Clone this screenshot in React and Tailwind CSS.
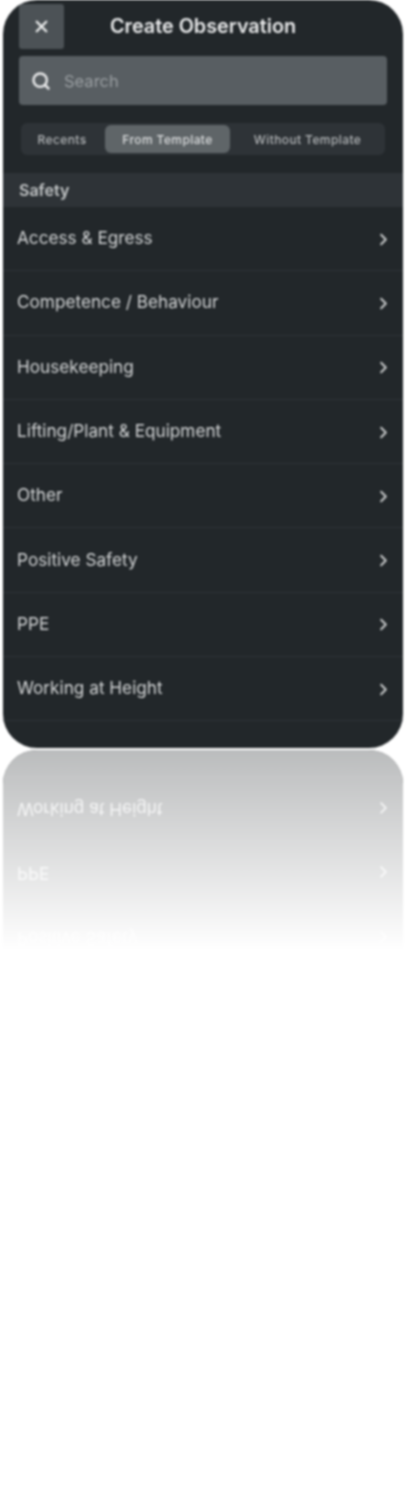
import { X, Search, ChevronRight } from 'lucide-react'

const rows = [
  'Access & Egress',
  'Competence / Behaviour',
  'Housekeeping',
  'Lifting/Plant & Equipment',
  'Other',
  'Positive Safety',
  'PPE',
  'Working at Height',
]

const fontStyle = "font-['Inter','Liberation_Sans',sans-serif]"

function Row({ label }) {
  return (
    <div className="h-[64.3px] shrink-0 pl-[14px] pr-[11px] flex items-center justify-between border-b border-[#2f3438]">
      <span className="text-[17.2px] leading-none text-[#d3d5d6] -mt-[2px]">{label}</span>
      <ChevronRight size={19} strokeWidth={2.4} className="text-[#c9cbcc] -mr-[1px] mt-[1px]" />
    </div>
  )
}

export default function App() {
  return (
    <div className={`w-[406px] h-[1500px] bg-white overflow-hidden blur-[0.8px] ${fontStyle}`}>
      {/* Phone card */}
      <div className="mx-[3px] w-[400px] h-[748px] bg-[#22272a] rounded-[34px] overflow-hidden flex flex-col">
        <div className="h-[56px] shrink-0 pl-[16px] pt-[4px] flex items-start relative">
          <div className="w-[45px] h-[45px] rounded-[3px] bg-[#4c5256] flex items-center justify-center">
            <X size={19} strokeWidth={3} className="text-[#eceded]" />
          </div>
          <span className="absolute left-0 right-0 top-[15px] text-center text-[19.8px] leading-[22px] font-semibold text-[#e8e9ea]">
            Create Observation
          </span>
        </div>
        <div className="mx-[16px] h-[49px] shrink-0 rounded-[4px] bg-[#585e62] flex items-center pl-[12px] gap-[13px]">
          <Search size={20} strokeWidth={3} className="text-[#e6e7e8]" />
          <span className="text-[16.5px] text-[#9a9fa2] mt-[2px]">Search</span>
        </div>
        <div className="mx-[18px] mt-[18px] h-[32px] shrink-0 rounded-[6px] bg-[#2e3337] flex items-center text-[12px] tracking-[0.4px] font-medium text-[#b4b7b9]">
          <span className="w-[82px] text-center mt-[2px]">Recents</span>
          <span className="w-[125px] h-[28px] ml-[2px] rounded-[6px] bg-[#5f6568] flex items-center justify-center text-[#dcdedf] pt-[2px]">From Template</span>
          <span className="flex-1 text-center mt-[2px]">Without Template</span>
        </div>
        <div className="mt-[18px] h-[34px] shrink-0 bg-[#2e3337] pl-[16px] flex items-center text-[16px] font-semibold text-[#c4c7c8]">
          Safety
        </div>
        {rows.map((r) => <Row key={r} label={r} />)}
      </div>

      {/* Reflection */}
      <div className="relative mx-[3px] mt-[2px] w-[400px] h-[200px]">
        <div className="h-full rounded-t-[34px] bg-[#22272a] overflow-hidden flex flex-col">
          <div className="h-[26px] shrink-0" />
          {[...rows].reverse().slice(0, 3).map((r) => (
            <div key={r} className="-scale-y-100">
              <Row label={r} />
            </div>
          ))}
        </div>
        <div className="absolute inset-0 rounded-t-[34px] bg-gradient-to-b from-[#ffffffb0] to-white" />
      </div>
    </div>
  )
}
